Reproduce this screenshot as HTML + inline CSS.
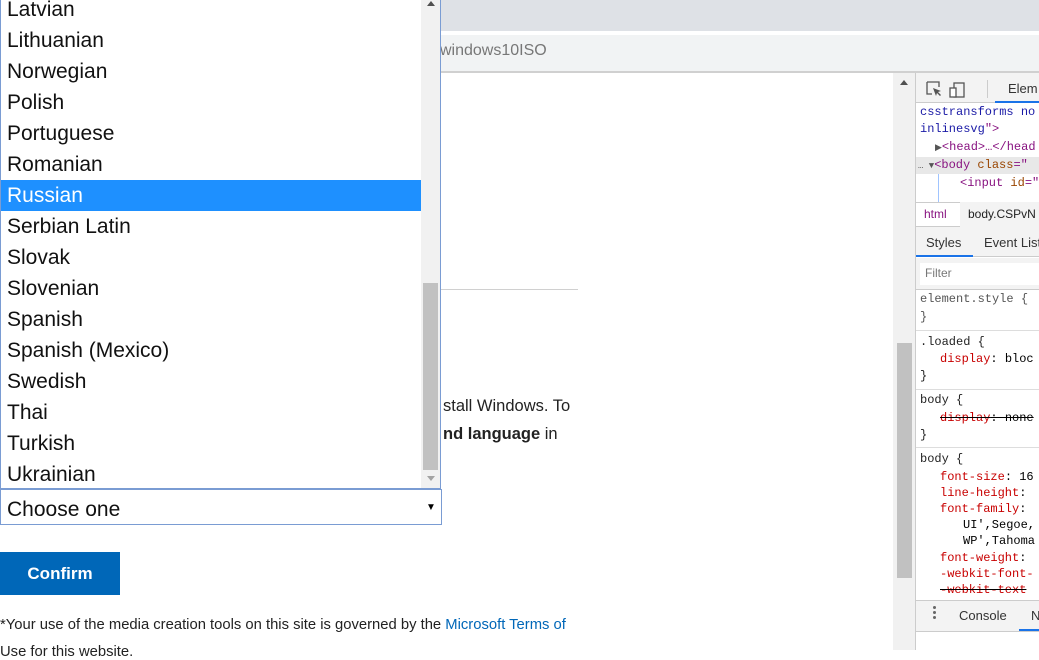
<!DOCTYPE html>
<html><head><style>
*{margin:0;padding:0;box-sizing:border-box}
body{width:1039px;height:650px;overflow:hidden;position:relative;background:#fff;font-family:"Liberation Sans",sans-serif}
.abs{position:absolute;white-space:nowrap}
.mono{font-family:"Liberation Mono",monospace;font-size:12px;white-space:nowrap}
.list div{height:31px;line-height:31px;padding-left:6px;font-size:21px;color:#111}
.red{color:#c80000}
</style></head><body>
<div class="abs" style="left:0;top:0;width:1039px;height:31px;background:#dee1e6"></div>
<div class="abs" style="left:0;top:35px;width:1039px;height:36px;background:#f1f3f4"></div>
<div class="abs" style="left:0;top:71px;width:1039px;height:2px;background:#d0d0d0"></div>
<div class="abs" style="left:440px;top:42px;font-size:16px;color:#777">windows10ISO</div>
<div class="abs" style="left:441px;top:289px;width:137px;height:1px;background:#d0d0d0"></div>
<div class="abs" style="left:443px;top:397px;font-size:16.5px;color:#222">stall Windows. To</div>
<div class="abs" style="left:443px;top:425px;font-size:16.5px;color:#222"><b>nd language</b> in</div>
<div class="abs" style="left:0;top:552px;width:120px;height:43px;background:#0067b8;color:#fff;font-weight:bold;font-size:17px;text-align:center;line-height:43px">Confirm</div>
<div class="abs" style="left:0;top:617px;font-size:14.8px;color:#222;white-space:nowrap">*Your use of the media creation tools on this site is governed by the <span style="color:#0067b8">Microsoft Terms of</span></div>
<div class="abs" style="left:0;top:644px;font-size:14.8px;color:#222">Use for this website.</div>
<!-- dropdown -->
<div class="abs list" style="left:0;top:-6px;width:441px;height:495px;border:1px solid #7a9cd3;border-top:none;background:#fff;overflow:hidden">
<div>Latvian</div><div>Lithuanian</div><div>Norwegian</div><div>Polish</div><div>Portuguese</div><div>Romanian</div>
<div style="background:#1e90ff;color:#fff">Russian</div>
<div>Serbian Latin</div><div>Slovak</div><div>Slovenian</div><div>Spanish</div><div>Spanish (Mexico)</div><div>Swedish</div><div>Thai</div><div>Turkish</div><div>Ukrainian</div>
</div>
<div class="abs" style="left:421px;top:0;width:19px;height:488px;background:#f1f1f1"></div>
<div class="abs" style="left:423px;top:283px;width:15px;height:187px;background:#c1c1c1"></div>
<div class="abs" style="left:427px;top:1px;width:0;height:0;border-left:4px solid transparent;border-right:4px solid transparent;border-bottom:5px solid #505050"></div>
<div class="abs" style="left:427px;top:476px;width:0;height:0;border-left:4px solid transparent;border-right:4px solid transparent;border-top:5px solid #a3a3a3"></div>
<div class="abs" style="left:0;top:489px;width:442px;height:36px;border:1px solid #7a9cd3;background:#fff;font-size:21px;line-height:40px;padding-left:6px;color:#111">Choose one</div>
<div class="abs" style="left:426px;top:502px;font-size:10px">▼</div>
<!-- page scrollbar -->
<div class="abs" style="left:893px;top:73px;width:22px;height:577px;background:#f1f1f1"></div>
<div class="abs" style="left:897px;top:343px;width:15px;height:235px;background:#c1c1c1"></div>
<div class="abs" style="left:900px;top:80px;width:0;height:0;border-left:4px solid transparent;border-right:4px solid transparent;border-bottom:5px solid #505050"></div>
<!-- devtools -->
<div class="abs" style="left:915px;top:73px;width:124px;height:577px;background:#fff;border-left:1px solid #ccc"></div>
<div class="abs" style="left:916px;top:73px;width:123px;height:30px;background:#f3f3f3;border-bottom:1px solid #ccc"></div>
<svg class="abs" style="left:925px;top:80px" width="40" height="18"><path d="M2 2h12v5M2 2v12h5" fill="none" stroke="#555" stroke-width="1.3"/><path d="M8 8l8 3-3 1 3 3-1 1-3-3-1 3z" fill="#555"/><rect x="29" y="3" width="10" height="14" fill="none" stroke="#555" stroke-width="1.3"/><rect x="25" y="8" width="6" height="9" fill="#fff" stroke="#555" stroke-width="1.3"/></svg>
<div class="abs" style="left:987px;top:80px;width:1px;height:18px;background:#ccc"></div>
<div class="abs" style="left:1008px;top:81px;font-size:13px;color:#333">Elem</div>
<div class="abs" style="left:995px;top:101px;width:44px;height:2px;background:#1a73e8"></div>
<div class="abs mono" style="left:920px;top:105px;color:#1a1aa6">csstransforms no</div>
<div class="abs mono" style="left:920px;top:122px;color:#1a1aa6">inlinesvg<span style="color:#881280">"&gt;</span></div>
<div class="abs mono" style="left:935px;top:140px;color:#881280"><span style="color:#555;font-size:9px">▶</span>&lt;head&gt;…&lt;/head</div>
<div class="abs" style="left:916px;top:157px;width:123px;height:17px;background:#e8e8e8"></div>
<div class="abs mono" style="left:918px;top:158px;color:#881280"><span style="color:#555;font-size:9px">… ▼</span>&lt;body <span style="color:#994500">class</span>="</div>
<div class="abs" style="left:938px;top:174px;width:1px;height:30px;background:#a0c4ff"></div>
<div class="abs mono" style="left:960px;top:176px;color:#881280">&lt;input <span style="color:#994500">id</span>="</div>
<div class="abs" style="left:916px;top:202px;width:123px;height:25px;background:#fff;border-top:1px solid #ccc;border-bottom:1px solid #ccc"></div>
<div class="abs" style="left:924px;top:207px;font-size:12px;color:#881280">html</div>
<div class="abs" style="left:960px;top:202px;width:79px;height:25px;background:#f3f3f3"></div>
<div class="abs" style="left:968px;top:207px;font-size:12px;color:#222">body.CSPvN</div>
<div class="abs" style="left:916px;top:227px;width:123px;height:30px;background:#f3f3f3;border-bottom:1px solid #ccc"></div>
<div class="abs" style="left:926px;top:235px;font-size:13px;color:#333">Styles</div>
<div class="abs" style="left:984px;top:235px;font-size:13px;color:#333">Event List</div>
<div class="abs" style="left:916px;top:255px;width:57px;height:2px;background:#1a73e8"></div>
<div class="abs" style="left:916px;top:258px;width:123px;height:32px;background:#f3f3f3;border-bottom:1px solid #ccc"></div>
<div class="abs" style="left:920px;top:263px;width:119px;height:22px;background:#fff"></div>
<div class="abs" style="left:925px;top:266px;font-size:12px;color:#777">Filter</div>
<div class="abs mono" style="left:920px;top:292px;color:#555">element.style {</div>
<div class="abs mono" style="left:920px;top:310px;color:#555">}</div>
<div class="abs" style="left:916px;top:330px;width:123px;height:1px;background:#ddd"></div>
<div class="abs mono" style="left:920px;top:335px;color:#222">.loaded {</div>
<div class="abs mono" style="left:940px;top:352px"><span class="red">display</span>: bloc</div>
<div class="abs mono" style="left:920px;top:369px;color:#222">}</div>
<div class="abs" style="left:916px;top:389px;width:123px;height:1px;background:#ddd"></div>
<div class="abs mono" style="left:920px;top:393px;color:#222">body {</div>
<div class="abs mono" style="left:940px;top:411px;text-decoration:line-through"><span class="red">display</span>: none</div>
<div class="abs mono" style="left:920px;top:428px;color:#222">}</div>
<div class="abs" style="left:916px;top:447px;width:123px;height:1px;background:#ddd"></div>
<div class="abs mono" style="left:920px;top:452px;color:#222">body {</div>
<div class="abs mono" style="left:940px;top:470px"><span class="red">font-size</span>: 16</div>
<div class="abs mono" style="left:940px;top:486px"><span class="red">line-height</span>:</div>
<div class="abs mono" style="left:940px;top:502px"><span class="red">font-family</span>:</div>
<div class="abs mono" style="left:963px;top:518px">UI',Segoe,</div>
<div class="abs mono" style="left:963px;top:534px">WP',Tahoma</div>
<div class="abs mono" style="left:940px;top:551px"><span class="red">font-weight</span>:</div>
<div class="abs mono" style="left:940px;top:567px"><span class="red">-webkit-font-</span></div>
<div class="abs mono" style="left:940px;top:583px;text-decoration:line-through"><span class="red">-webkit-text</span></div>
<div class="abs" style="left:916px;top:600px;width:123px;height:32px;background:#f3f3f3;border-top:1px solid #ccc;border-bottom:1px solid #ccc"></div>
<div class="abs" style="left:933px;top:606px;width:3px;height:3px;background:#666;border-radius:50%;box-shadow:0 5px 0 #666,0 10px 0 #666"></div>
<div class="abs" style="left:959px;top:608px;font-size:13px;color:#333">Console</div>
<div class="abs" style="left:1031px;top:608px;font-size:13px;color:#333">N</div>
<div class="abs" style="left:1019px;top:629px;width:20px;height:2px;background:#1a73e8"></div>
</body></html>
